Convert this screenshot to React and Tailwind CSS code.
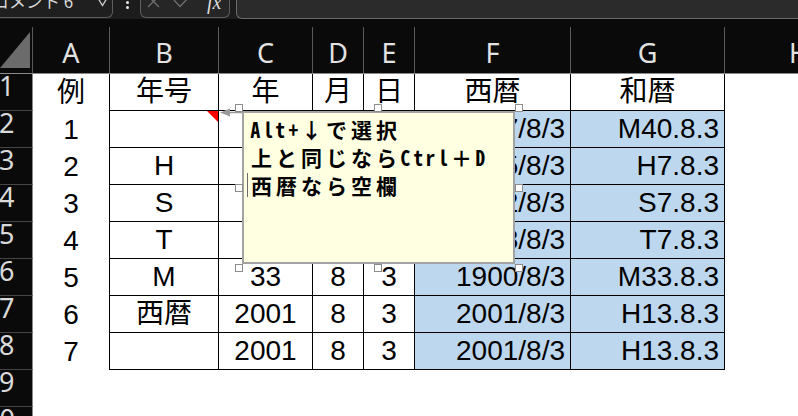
import React from "react";

const ROWS = [
  ["例", "年号", "年", "月", "日", "西暦", "和暦"],
  ["1", "", "40", "8", "3", "1907/8/3", "M40.8.3"],
  ["2", "H", "7", "8", "3", "1995/8/3", "H7.8.3"],
  ["3", "S", "7", "8", "3", "1932/8/3", "S7.8.3"],
  ["4", "T", "7", "8", "3", "1918/8/3", "T7.8.3"],
  ["5", "M", "33", "8", "3", "1900/8/3", "M33.8.3"],
  ["6", "西暦", "2001", "8", "3", "2001/8/3", "H13.8.3"],
  ["7", "", "2001", "8", "3", "2001/8/3", "H13.8.3"],
];

const GRID =
  "grid w-[835px] grid-cols-[33px_77px_109px_94px_51px_51px_156px_154px_110px]";
const CELL_FONT =
  "font-['Liberation_Sans','Noto_Sans_CJK_JP',sans-serif] text-[28px] leading-none text-black";
const HEAD_FONT = "font-['Noto_Sans','Liberation_Sans',sans-serif] text-[27px] leading-none";

function TopBar() {
  return (
    <div className="flex h-[19px] overflow-hidden bg-[#1c1c1c]">
      {/* name box */}
      <div className="relative flex h-[18px] w-[113px] items-start overflow-hidden rounded-br-[6px] border-r border-b border-[#5e5e5e] bg-[#1f1f1f]">
        <span className="-mt-[8px] -ml-[8px] whitespace-nowrap font-['Noto_Sans_CJK_JP',sans-serif] text-[17px] leading-none text-[#d6d6d6]">
          コメント 6
        </span>
        <svg className="absolute left-[95px] top-0" width="15" height="8" viewBox="0 0 15 8">
          <polyline points="1,-5 7.5,5.5 14,-5" fill="none" stroke="#cfcfcf" strokeWidth="1.3" />
        </svg>
      </div>
      {/* overflow dots */}
      <div className="flex w-[27px] flex-col items-center gap-[2px] pt-[1px] pl-[1px]">
        <span className="h-[3px] w-[3px] rounded-full bg-[#e6e6e6]" />
        <span className="h-[3px] w-[3px] rounded-full bg-[#e6e6e6]" />
      </div>
      {/* cancel / enter / fx */}
      <div className="relative h-[18px] w-[90px] overflow-hidden rounded-b-[6px] border-x border-b border-[#5e5e5e] bg-[#262626]">
        <svg className="absolute left-[6px] top-0" width="14" height="9" viewBox="0 0 14 9">
          <path d="M1,-4 L12,7 M12,-4 L1,7" fill="none" stroke="#707070" strokeWidth="1.3" />
        </svg>
        <svg className="absolute left-[32px] top-0" width="17" height="9" viewBox="0 0 17 9">
          <polyline points="1,0 7,6.5 16,-3" fill="none" stroke="#707070" strokeWidth="1.3" />
        </svg>
        <span className="absolute left-[66px] -top-[8px] font-['Liberation_Serif',serif] text-[20px] italic leading-none text-[#dcdcdc]">
          fx
        </span>
      </div>
      <div className="w-[6px]" />
      {/* formula input */}
      <div className="h-[19px] flex-1 rounded-bl-[6px] border-l border-b border-[#6a6a6a] bg-[#2b2b2b]" />
    </div>
  );
}

function ColumnHeaders() {
  const letters = ["A", "B", "C", "D", "E", "F", "G", "H"];
  return (
    <div className={`${GRID} h-[55px] items-end border-b border-[#8a8a8a] bg-[#0a0a0a]`}>
      <div className="relative h-[54px] self-end">
        <div className="absolute right-0 bottom-0 h-[46px] border-r border-[#5a5a5a]" />
        <svg className="absolute left-0 top-0" width="33" height="54" viewBox="0 0 33 54">
          <polygon points="0,49 30,49 30,13" fill="#6b6b6b" />
        </svg>
      </div>
      {letters.map((l, i) => (
        <div
          key={l}
          className={`flex h-[46px] items-center justify-center pt-[4px] text-[#e2e2e2] ${HEAD_FONT} ${
            i < 7 ? "border-r border-[#5a5a5a]" : "pr-[22px] pl-[60px]"
          }`}
        >
          {l}
        </div>
      ))}
    </div>
  );
}

function RowHeader({ n }) {
  return (
    <div className="h-[37px] overflow-hidden border-r border-b border-r-[#8a8a8a] border-b-[#454545] bg-[#0a0a0a]">
      <div className={`-mt-[2px] whitespace-nowrap text-[#d9d9d9] ${HEAD_FONT} ${n >= 10 ? "-ml-[16px]" : "-ml-[1px]"}`}>
        {n}
      </div>
    </div>
  );
}

function DataRow({ n, data }) {
  const inTable = !!data;
  const vals = data || ["", "", "", "", "", "", ""];
  const body = inTable && n > 1;
  return (
    <div className={`${GRID} h-[37px]`}>
      <RowHeader n={n} />
      {vals.map((v, i) => {
        const right = body && i >= 5;
        let cls = `relative flex h-[37px] items-center ${CELL_FONT} ${
          right ? "justify-end pr-[5px]" : "justify-center"
        }`;
        if (inTable) {
          cls += i === 0 ? " border-r border-black" : " border-r border-b border-black";
          if (right) cls += " bg-[#bdd7ee]";
        }
        return (
          <div key={i} className={cls}>
            {v}
            {n === 2 && i === 1 && (
              <span className="absolute right-0 top-0 h-0 w-0 border-t-[11px] border-l-[11px] border-t-[#ff0000] border-l-transparent" />
            )}
          </div>
        );
      })}
      <div className="h-[37px]" />
    </div>
  );
}

function NoteLine({ text, cursor }) {
  return (
    <div className="flex h-[28px] items-center whitespace-nowrap">
      {cursor && <span className="-ml-[2px] mr-px inline-block h-[24px] w-px bg-[#6b6b6b]" />}
      {Array.from(text).map((ch, i) =>
        ch.charCodeAt(0) > 0xff ? (
          <span key={i} className="inline-block w-[25px] text-center">
            {ch}
          </span>
        ) : (
          <span key={i} className="inline-block w-[12.5px] scale-x-[0.92] text-center">
            {ch}
          </span>
        )
      )}
    </div>
  );
}

function Note() {
  const handles = [
    "left-[235px] top-[104px]",
    "left-[374px] top-[104px]",
    "left-[515px] top-[104px]",
    "left-[235px] top-[184px]",
    "left-[515px] top-[184px]",
    "left-[235px] top-[264px]",
    "left-[374px] top-[264px]",
    "left-[515px] top-[264px]",
  ];
  return (
    <>
      <svg className="absolute left-[219px] top-[107px]" width="24" height="11" viewBox="0 0 24 11">
        <polygon points="1,5.5 11,1.5 11,9.5" fill="#9a9a9a" />
        <line x1="10" y1="5.5" x2="24" y2="5.5" stroke="#9a9a9a" strokeWidth="1.5" />
      </svg>
      <div className="absolute left-[242px] top-[111px] h-[153px] w-[273px] border-2 border-[#a3a3a3] bg-[#ffffe1] pt-[2px] pl-[5px] font-['Noto_Sans_Mono_CJK_JP','Noto_Sans_CJK_JP',monospace] text-[21px] font-bold leading-[28px] text-black">
        <NoteLine text="Alt+↓で選択" />
        <NoteLine text="上と同じならCtrl＋D" />
        <NoteLine text="西暦なら空欄" cursor />
      </div>
      {handles.map((h) => (
        <span key={h} className={`absolute h-[8px] w-[8px] border border-[#8c8c8c] bg-white ${h}`} />
      ))}
    </>
  );
}

export default function App() {
  return (
    <div className="relative h-[416px] w-[798px] overflow-hidden bg-white">
      <TopBar />
      <ColumnHeaders />
      {Array.from({ length: 10 }, (_, i) => (
        <DataRow key={i} n={i + 1} data={ROWS[i]} />
      ))}
      <Note />
    </div>
  );
}
